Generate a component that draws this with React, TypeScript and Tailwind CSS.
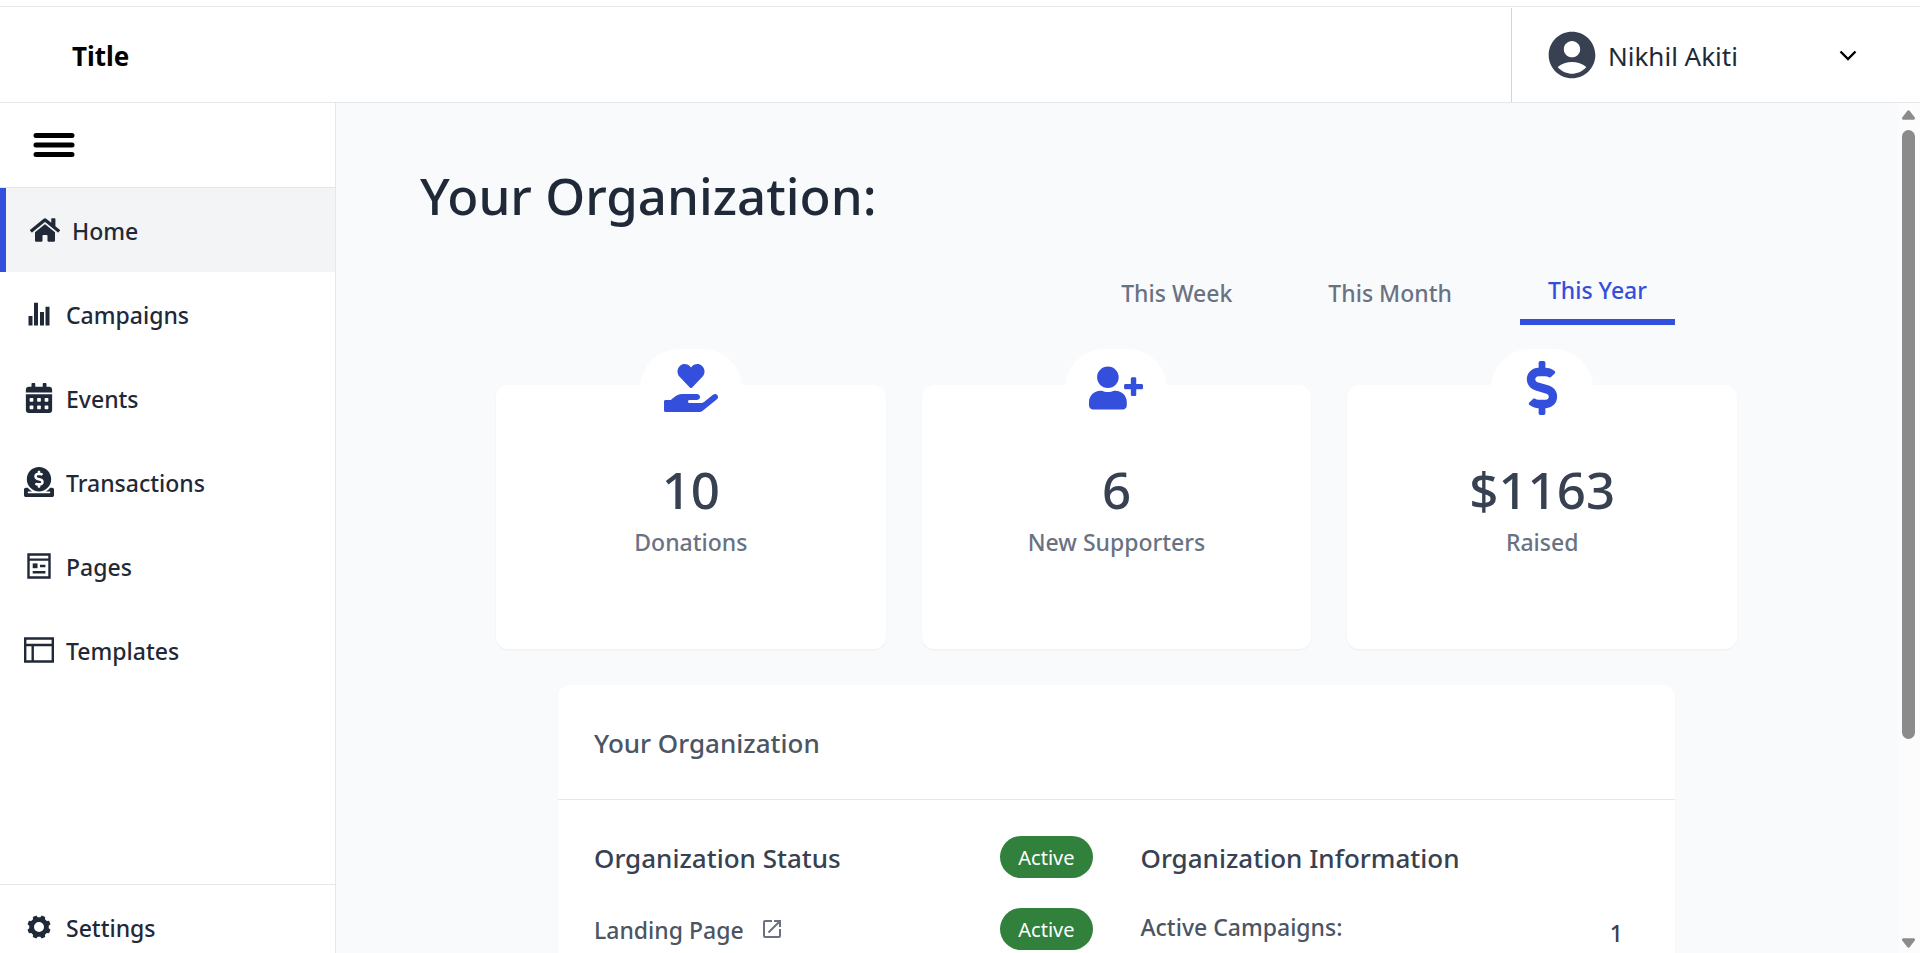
import React from "react";
import { FaHome, FaCalendarAlt, FaDonate, FaHandHoldingHeart, FaUserPlus, FaDollarSign } from "react-icons/fa";
import { MdAccountCircle, MdOpenInNew } from "react-icons/md";

function BarsIcon() {
  return (
    <svg width="30" height="30" viewBox="0 0 30 30" fill="currentColor" aria-hidden="true">
      <path d="M4.5 17h4v9.5h-4zM10 3.7h4v22.8h-4zM16 13h4v13.5h-4zM21.5 7.7h4v18.8h-4z" />
    </svg>
  );
}

function PageIcon() {
  return (
    <svg width="30" height="30" viewBox="0 0 30 30" fill="none" stroke="currentColor" strokeWidth="2.4" aria-hidden="true">
      <path d="M4.5 3.500h21v23H4.500zM4.500 8.600h21M16 15h5.400M8.700 21.200h12.700" />
      <path d="M8.700 12.400h4.800v4.800H8.700z" fill="currentColor" stroke="none" />
    </svg>
  );
}

function TemplateIcon() {
  return (
    <svg width="30" height="30" viewBox="0 0 30 30" fill="none" stroke="currentColor" strokeWidth="2.4" aria-hidden="true">
      <path d="M1.200 3.500h27.600v23H1.200zM1.200 10h27.600M8.700 10v16.500" />
    </svg>
  );
}

// Eight teeth, each drawn as root, tip, tip, root around the centre.
const gearOutline = Array.from({ length: 8 }, (_, i) => 22.5 + i * 45)
  .flatMap((angle) => [
    [angle - 15, 9.8],
    [angle - 9, 11.8],
    [angle + 9, 11.8],
    [angle + 15, 9.8],
  ])
  .map(([angle, radius]) => {
    const rad = (angle * Math.PI) / 180;
    return `${(15 + radius * Math.cos(rad)).toFixed(2)} ${(15 + radius * Math.sin(rad)).toFixed(2)}`;
  })
  .join("L");

function GearIcon() {
  return (
    <svg width="30" height="30" viewBox="0 0 30 30" aria-hidden="true">
      <path
        fill="currentColor"
        fillRule="evenodd"
        d={`M${gearOutline}zM15 10a5 5 0 1 0 0 10a5 5 0 1 0 0-10z`}
      />
    </svg>
  );
}

const navItems = [
  { label: "Campaigns", icon: <BarsIcon /> },
  { label: "Events", icon: <FaCalendarAlt size={30} /> },
  { label: "Transactions", icon: <FaDonate size={30} /> },
  { label: "Pages", icon: <PageIcon /> },
  { label: "Templates", icon: <TemplateIcon /> },
];

const stats = [
  { value: "10", label: "Donations", icon: <FaHandHoldingHeart size={54} /> },
  { value: "6", label: "New Supporters", icon: <FaUserPlus size={54} /> },
  { value: "$1163", label: "Raised", icon: <FaDollarSign size={54} /> },
];

function Header() {
  return (
    <header className="flex h-24 shrink-0 items-stretch justify-between border-b border-gray-200 pt-px">
      <div className="flex items-center pt-0.5 pl-[72px] text-[26px] font-bold text-black">Title</div>
      <button type="button" className="flex w-[409px] items-center border-l border-gray-300 pr-[58px] pl-8 text-left">
        <MdAccountCircle size={56} className="text-[#374151]" />
        <span className="ml-2 flex-1 pt-0.5 text-[26px] text-gray-800">Nikhil Akiti</span>
        <svg width="28" height="28" viewBox="0 0 28 28" fill="none" stroke="#000" strokeWidth="2.4" aria-hidden="true">
          <path d="M6.5 10.500l7.500 7.500 7.500-7.500" />
        </svg>
      </button>
    </header>
  );
}

function Sidebar() {
  return (
    <aside className="flex w-[336px] shrink-0 flex-col border-r border-gray-200 bg-white text-[23px] font-medium text-[#1f2937]">
      <div className="flex h-[85px] shrink-0 items-center border-b border-gray-200 pl-8">
        <button type="button" aria-label="Toggle menu">
          <svg width="44" height="26" viewBox="0 0 44 26" stroke="#000" strokeWidth="5" strokeLinecap="round" aria-hidden="true">
            <path d="M4 3.500h36M4 13h36M4 22.500h36" />
          </svg>
        </button>
      </div>
      <nav className="flex flex-1 flex-col">
        <a href="#home" className="flex h-[84px] items-center gap-3 border-l-6 border-[#334fdb] bg-gray-100 px-6">
          <FaHome size={30} />
          <span className="pt-0.5">Home</span>
        </a>
        {navItems.map((item) => (
          <a key={item.label} href={"#" + item.label.toLowerCase()} className="flex h-[84px] items-center gap-3 px-6">
            {item.icon}
            <span className="pt-0.5">{item.label}</span>
          </a>
        ))}
      </nav>
      <div className="h-[69px] shrink-0 border-t border-gray-200">
        <a href="#settings" className="flex h-[84px] items-center gap-3 px-6">
          <GearIcon />
          <span className="pt-0.5">Settings</span>
        </a>
      </div>
    </aside>
  );
}

function Tabs() {
  return (
    <div role="tablist" className="mr-[222px] flex items-end justify-end gap-10 text-[23px] font-medium text-gray-500">
      <button type="button" role="tab" aria-selected="false" className="h-[66px] px-7 pt-0.5">
        This Week
      </button>
      <button type="button" role="tab" aria-selected="false" className="h-[66px] px-7 pt-0.5">
        This Month
      </button>
      <button
        type="button"
        role="tab"
        aria-selected="true"
        className="h-[66px] border-b-6 border-[#334fdb] px-7 pt-0.5 text-[#334fdb]"
      >
        This Year
      </button>
    </div>
  );
}

function Badge() {
  return (
    <span className="flex h-[42px] items-center rounded-full bg-[#31803c] px-[18px] pt-0.5 text-[20px] font-normal text-white">
      Active
    </span>
  );
}

function ScrollRail() {
  return (
    <div className="flex w-[23px] shrink-0 flex-col items-center bg-[#fcfcfc] pt-1.5 pb-1 text-[#8b8b8b]" aria-hidden="true">
      <svg width="15" height="12" viewBox="0 0 16 12" fill="currentColor">
        <path d="M6.600 1.700q1.400-1.600 2.800 0l5.300 7q1 2-1 2.300H2.300q-2-.3-1-2.300z" />
      </svg>
      <div className="mt-[9px] h-[609px] w-[13px] rounded-full bg-[#8b8b8b]" />
      <svg className="mt-auto" width="15" height="12" viewBox="0 0 16 12" fill="currentColor">
        <path d="M6.600 10.300q1.400 1.600 2.800 0l5.300-7q1-2-1-2.300H2.300q-2 .3-1 2.300z" />
      </svg>
    </div>
  );
}

export default function App() {
  return (
    <div className="flex h-screen flex-col overflow-hidden bg-white font-['Noto_Sans','Open_Sans',sans-serif]">
      <div className="h-[7px] shrink-0 border-b border-gray-200" />
      <Header />
      <div className="flex min-h-0 flex-1">
        <Sidebar />
        <main className="min-w-0 flex-1 overflow-hidden bg-[#f9fafc]">
          <h1 className="mt-[59px] ml-[84px] text-[51px] leading-[66px] font-medium text-[#1f2937]">Your Organization:</h1>
          <div className="mt-[31px]">
            <Tabs />
          </div>
          <section className="mx-40 mt-[60px] grid grid-cols-3 gap-9">
            {stats.map((s) => (
              <div key={s.label} className="flex h-[264px] flex-col items-center rounded-xl bg-white shadow-xs">
                <div className="-mt-9 rounded-full bg-white px-6 py-3 text-[#334fdb]">{s.icon}</div>
                <div className="mt-8 text-[51px] leading-[60px] font-medium text-[#374151]">{s.value}</div>
                <div className="mt-1 text-[23px] leading-[38px] font-medium text-gray-500">{s.label}</div>
              </div>
            ))}
          </section>
          <section className="mx-[222px] mt-9 rounded-t-xl bg-white pb-9 shadow-xs">
            <h2 className="flex h-[115px] items-center border-b border-gray-200 px-9 pt-0.5 text-[26px] font-medium text-[#4b5563]">
              Your Organization
            </h2>
            <div className="grid grid-cols-2 gap-12 px-9 pt-9 text-[23px] font-medium text-[#4b5563]">
              <div className="flex flex-col gap-[30px]">
                <div className="flex h-[42px] items-center justify-between">
                  <h3 className="pt-0.5 text-[26px] text-[#374151]">Organization Status</h3>
                  <Badge />
                </div>
                <div className="flex h-[42px] items-center justify-between">
                  <a href="#landing" className="flex items-center gap-4">
                    <span className="pt-0.5">Landing Page</span>
                    <MdOpenInNew size={24} className="text-gray-500" />
                  </a>
                  <Badge />
                </div>
              </div>
              <div className="flex flex-col gap-[30px]">
                <h3 className="flex h-[42px] items-center pt-0.5 text-[26px] text-[#374151]">Organization Information</h3>
                <div className="flex h-[42px] justify-between pt-0.5 pr-4">
                  <span>Active Campaigns:</span>
                  <span className="pt-1.5 text-[#374151]">1</span>
                </div>
              </div>
            </div>
          </section>
        </main>
        <ScrollRail />
      </div>
    </div>
  );
}
